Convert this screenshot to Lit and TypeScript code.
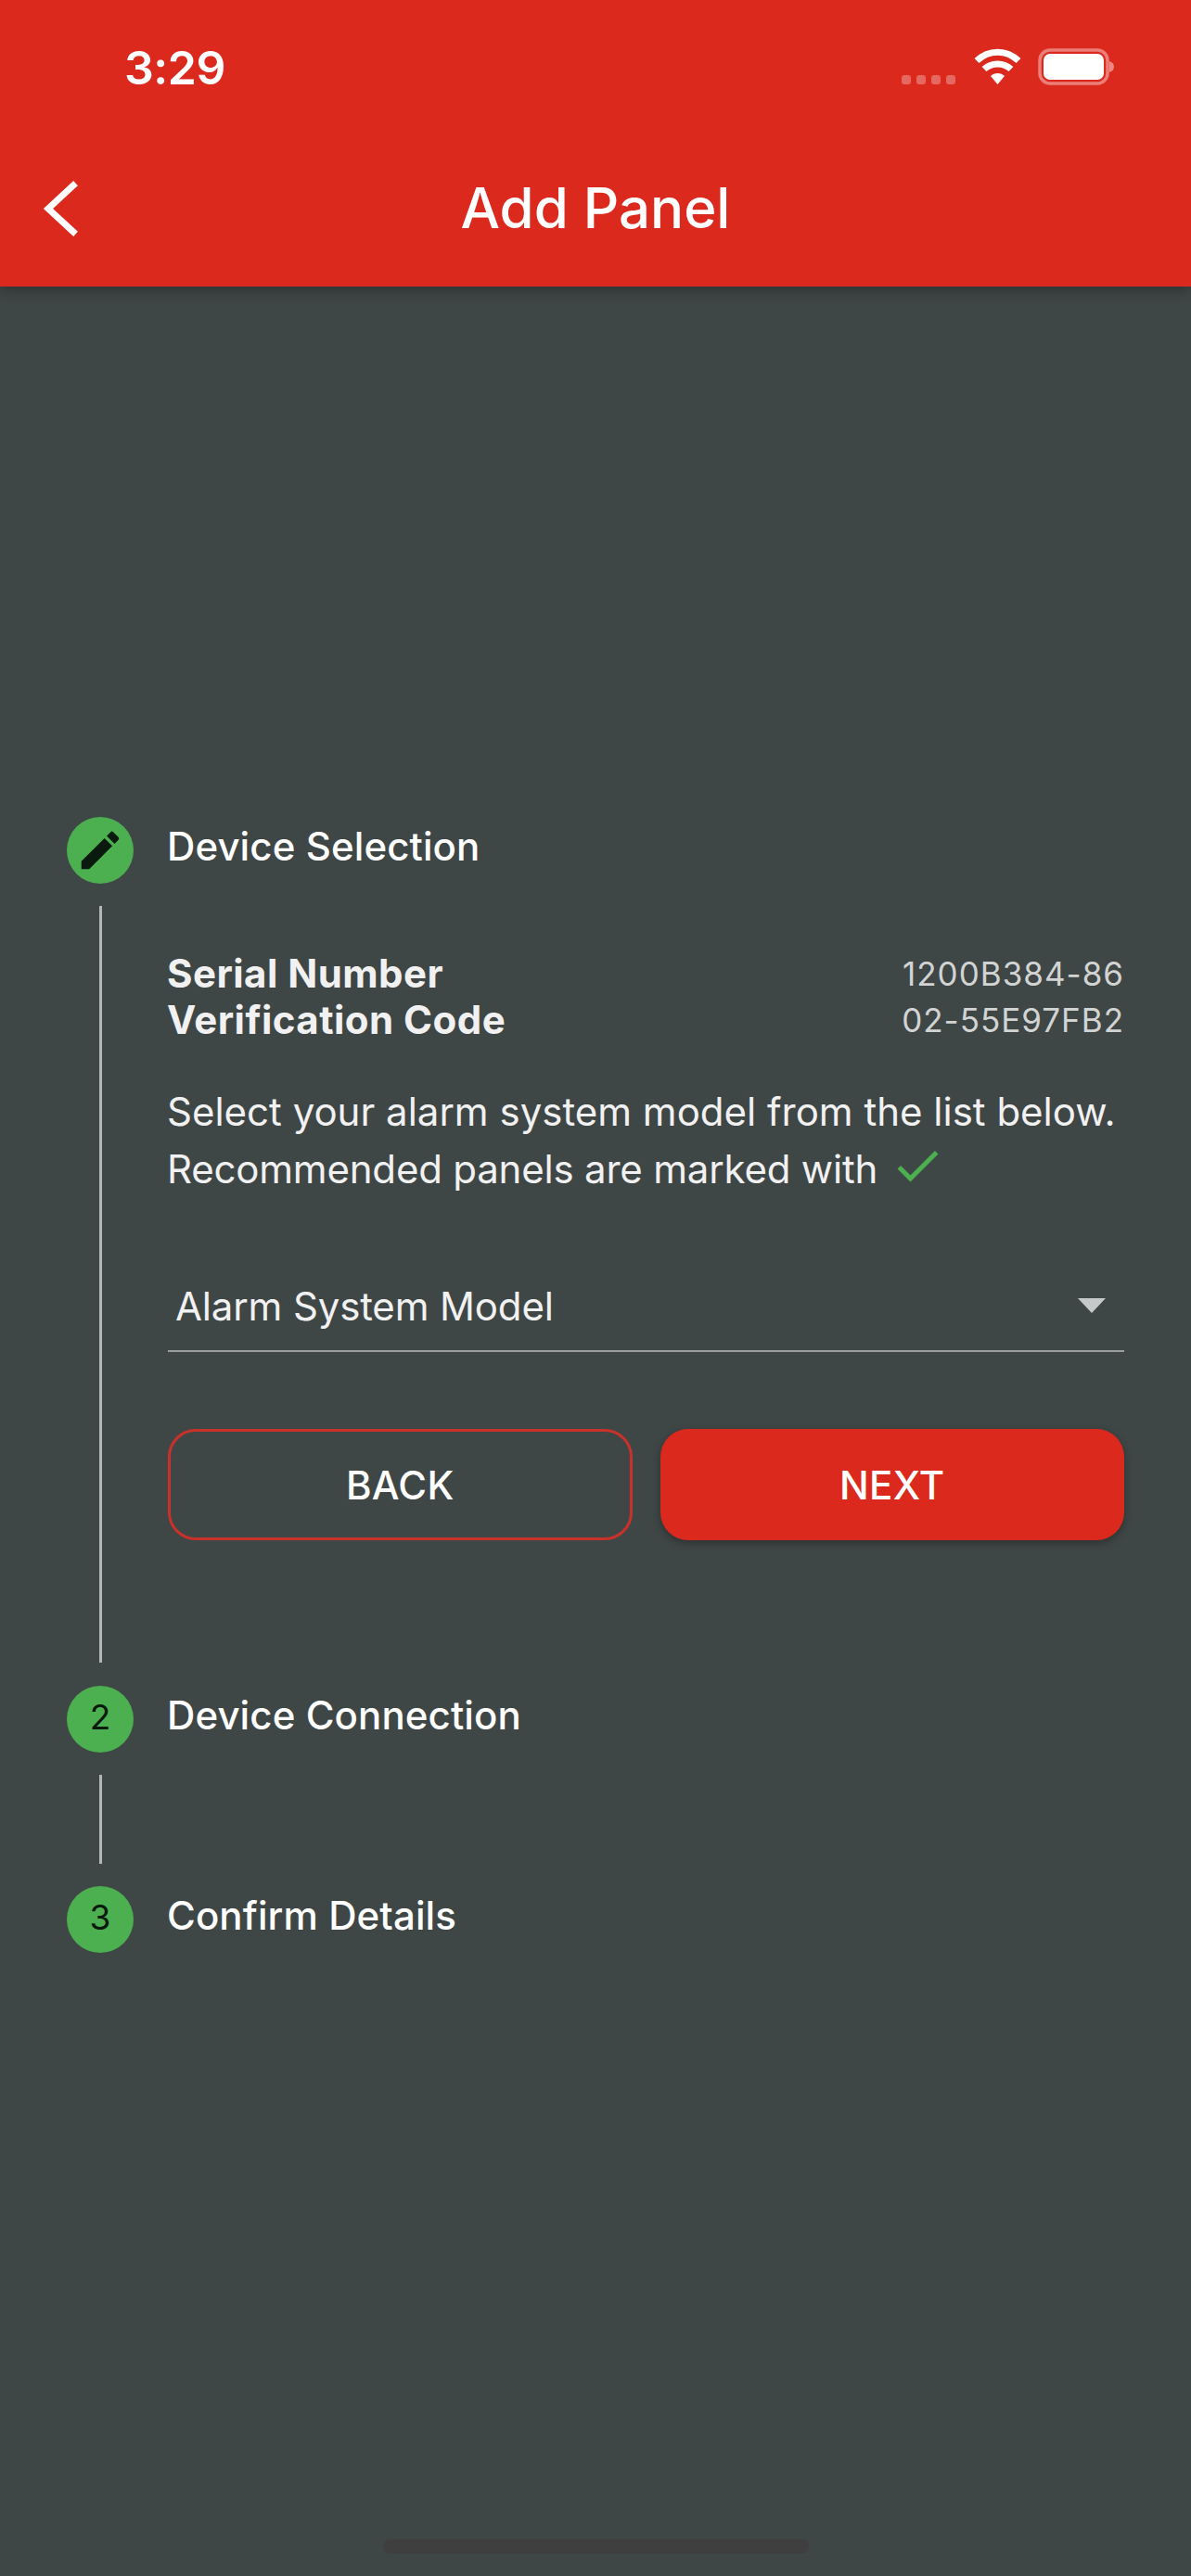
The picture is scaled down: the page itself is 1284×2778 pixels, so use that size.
import { LitElement, html, css } from "lit";
import { customElement } from "lit/decorators.js";

@customElement("app-root")
export class AppRoot extends LitElement {
  static styles = css`
    :host {
      display: flex;
      flex-direction: column;
      width: 1284px;
      height: 2778px;
      overflow: hidden;
      background: #3f4646;
      color: #fff;
      font-family: Inter, "Liberation Sans", sans-serif;
    }
    .appbar {
      height: 309px;
      flex: none;
      background: #dc291e;
      box-shadow: 0 4px 14px rgba(0, 0, 0, 0.28);
      display: flex;
      flex-direction: column;
      position: relative;
      z-index: 1;
    }
    .status {
      height: 150px;
      display: flex;
      align-items: flex-start;
      justify-content: space-between;
      padding: 0 82px 0 134px;
    }
    .time {
      font-size: 50px;
      font-weight: 600;
      line-height: 60px;
      margin-top: 43px;
      letter-spacing: -0.5px;
    }
    .indicators {
      display: flex;
      align-items: flex-start;
      margin-top: 50px;
    }
    .indicators svg { display: block; }
    .battery { margin-left: -5px; margin-top: 2px; }
    .nav {
      flex: 1;
      display: grid;
      grid-template-columns: 1fr auto 1fr;
      align-items: center;
      padding-bottom: 4px;
    }
    .back { padding-left: 43px; display: flex; margin-top: -5px; }
    .title {
      font-size: 60px;
      font-weight: 500;
      line-height: 72px;
      margin-top: -7px;
    }
    .steps {
      flex: 1;
      padding: 572px 72px 0;
      display: flex;
      flex-direction: column;
    }
    .head {
      display: flex;
      align-items: center;
      gap: 37px;
      height: 72px;
    }
    .dot {
      width: 72px;
      height: 72px;
      flex: none;
      border-radius: 50%;
      background: #4caf50;
      color: #0b1a0e;
      display: flex;
      align-items: center;
      justify-content: center;
      font-size: 37px;
      line-height: 68px;
    }
    .num { margin-top: -4px; }
    .name {
      font-size: 42px;
      font-weight: 500;
      line-height: 50px;
      margin: -8px 0 0 -1px;
      letter-spacing: 0.1px;
    }
    .body { display: flex; gap: 37px; margin: 24px 0 25px; }
    .body.short { margin: 24px 0; height: 96px; }
    .rail { width: 72px; flex: none; display: flex; justify-content: center; }
    .line { width: 3px; background: #b4b7b7; }
    .content { flex: 1; padding: 48px 0 132px; min-width: 0; }
    .info { display: flex; justify-content: space-between; }
    .labels {
      font-size: 42px;
      font-weight: 700;
      line-height: 50px;
      color: #f1f1f1;
      letter-spacing: 0.45px;
      margin-left: -1px;
    }
    .values {
      font-size: 35px;
      line-height: 50px;
      color: #d2d4d4;
      text-align: right;
      letter-spacing: 1px;
    }
    .intro {
      margin: 43px 0 0 -1px;
      font-size: 42px;
      line-height: 62px;
      color: #f1f1f1;
      white-space: nowrap;
    }
    .second { letter-spacing: -0.2px; }
    .intro svg {
      width: 60px;
      height: 60px;
      margin: -10px 0 -10px 1px;
      vertical-align: -1px;
      fill: #4caf50;
    }
    .select {
      margin-top: 82px;
      height: 84px;
      padding: 0 20px 14px 8px;
      border-bottom: 2px solid #9a9e9e;
      display: flex;
      align-items: center;
      justify-content: space-between;
      font-size: 42px;
      letter-spacing: -0.15px;
      color: #f1f1f1;
      box-sizing: border-box;
    }
    .caret {
      width: 0;
      height: 0;
      border-left: 15px solid transparent;
      border-right: 15px solid transparent;
      border-top: 16px solid #c5c9ca;
    }
    .actions {
      margin-top: 83px;
      display: grid;
      grid-template-columns: 1fr 1fr;
      gap: 30px;
    }
    .btn {
      height: 120px;
      box-sizing: border-box;
      border-radius: 30px;
      display: flex;
      align-items: center;
      justify-content: center;
      font-size: 42px;
      font-weight: 500;
      letter-spacing: 0.3px;
      color: #fff;
    }
    .outline { border: 3px solid #c8322a; }
    .solid { background: #dc291e; box-shadow: 0 3px 8px rgba(0, 0, 0, 0.3); }
    .home {
      width: 459px;
      height: 16px;
      border-radius: 8px;
      background: #403f3f;
      margin: 0 auto 24px;
      flex: none;
    }
  `;

  render() {
    return html`
      <header class="appbar">
        <div class="status">
          <div class="time">3:29</div>
          <div class="indicators">
            <svg width="152" height="46" viewBox="0 0 152 46">
              <g fill="#fff" fill-opacity="0.3">
                <rect x="0" y="31" width="10" height="10" rx="3"></rect>
                <rect x="16" y="31" width="10" height="10" rx="3"></rect>
                <rect x="32" y="31" width="10" height="10" rx="3"></rect>
                <rect x="48" y="31" width="10" height="10" rx="3"></rect>
              </g>
              <g fill="none" stroke="#fff" stroke-width="7">
                <path d="M81 15.5C94 3 113 3 126 15.5"></path>
                <path d="M89 24.5C97 17 110 17 118 24.5"></path>
              </g>
              <path d="M96 32C100 28 107 28 111 32L103.500 41Z" fill="#fff"></path>
            </svg>
            <svg class="battery" width="83" height="42" viewBox="0 0 83 42">
              <rect x="2" y="2" width="73" height="36" rx="11" fill="none" stroke="#fff" stroke-opacity="0.4" stroke-width="3.500"></rect>
              <rect x="6" y="6" width="65" height="28" rx="7" fill="#fff"></rect>
              <path d="M77 14C80 15 82 17 82 20C82 23 80 25 77 26Z" fill="#fff" fill-opacity="0.45"></path>
            </svg>
          </div>
        </div>
        <div class="nav">
          <div class="back">
            <svg width="44" height="60" viewBox="0 0 44 60">
              <path d="M36 5L9 30L36 55" fill="none" stroke="#fff" stroke-width="7" stroke-linecap="square"></path>
            </svg>
          </div>
          <div class="title">Add Panel</div>
          <div></div>
        </div>
      </header>

      <main class="steps">
        <div class="head">
          <div class="dot">
            <svg width="54" height="54" viewBox="0 0 24 24" fill="#0b1a0e">
              <path d="M3 17.250V21h3.750L17.810 9.940l-3.750-3.750L3 17.250zM20.710 7.040a1 1 0 0 0 0-1.410l-2.340-2.340a1 1 0 0 0-1.410 0l-1.830 1.830 3.750 3.750 1.830-1.830z"></path>
            </svg>
          </div>
          <div class="name">Device Selection</div>
        </div>
        <div class="body">
          <div class="rail"><div class="line"></div></div>
          <div class="content">
            <div class="info">
              <div class="labels">Serial Number<br />Verification Code</div>
              <div class="values">1200B384-86<br />02-55E97FB2</div>
            </div>
            <div class="intro">
              Select your alarm system model from the list below.<br />
              <span class="second">Recommended panels are marked with</span>
              <svg viewBox="0 0 24 24"><path d="M9 16.170L4.830 12l-1.420 1.410L9 19 21 7l-1.410-1.410z"></path></svg>
            </div>
            <div class="select">
              <span>Alarm System Model</span>
              <span class="caret"></span>
            </div>
            <div class="actions">
              <div class="btn outline">BACK</div>
              <div class="btn solid">NEXT</div>
            </div>
          </div>
        </div>
        <div class="head">
          <div class="dot"><span class="num">2</span></div>
          <div class="name">Device Connection</div>
        </div>
        <div class="body short">
          <div class="rail"><div class="line"></div></div>
        </div>
        <div class="head">
          <div class="dot"><span class="num">3</span></div>
          <div class="name">Confirm Details</div>
        </div>
      </main>
      <div class="home"></div>
    `;
  }
}
